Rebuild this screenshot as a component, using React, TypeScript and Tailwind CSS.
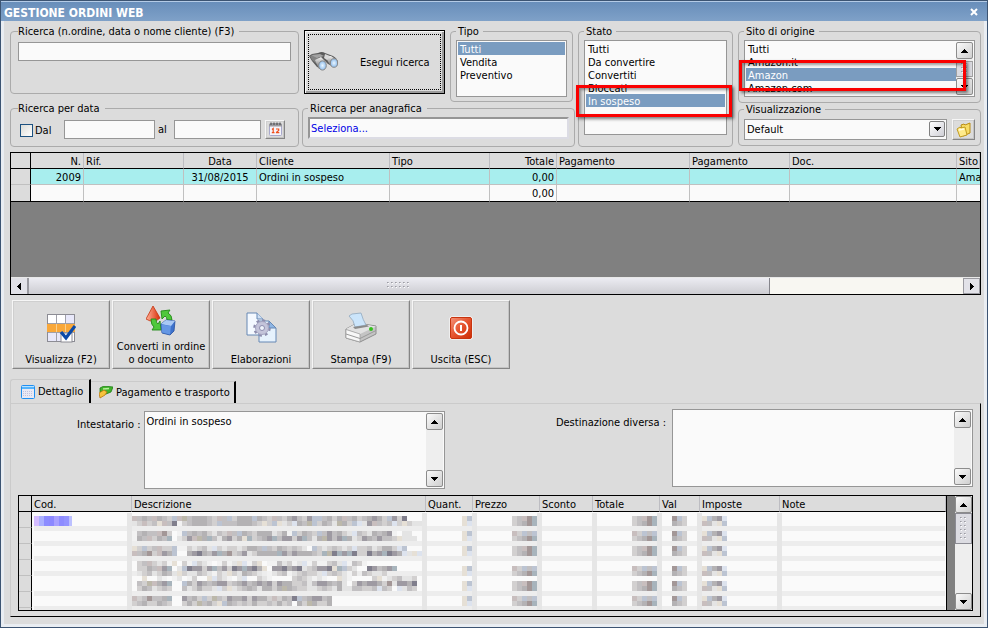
import React from "react";

type Option = { label: string };

const box = "rounded-[4px] border border-[#ababab] min-w-0";
const field = "border border-[#969696] bg-[#fafafa]";
const raised =
  "border border-t-[#f6f6f6] border-l-[#f6f6f6] border-r-[#858585] border-b-[#858585] bg-[#dcdcdc] shadow-[inset_-1px_-1px_0_#c4c4c4,inset_1px_1px_0_#cfcfcf]";

function Arrow({ dir }: { dir: "up" | "down" | "left" | "right" }) {
  const points = {
    up: "0,4 3.5,0 7,4",
    down: "0,0 7,0 3.5,4",
    left: "4,0 4,7 0,3.5",
    right: "0,0 4,3.5 0,7",
  }[dir];
  const wide = dir === "up" || dir === "down";
  return (
    <svg width={wide ? 7 : 4} height={wide ? 4 : 7} shapeRendering="crispEdges" aria-hidden="true">
      <polygon points={points} fill="#000" />
    </svg>
  );
}

const scrollKey =
  "flex size-[17px] shrink-0 items-center justify-center rounded-[2px] border border-[#8c8c8c] bg-linear-to-br from-[#fafafa] to-[#cfcfcf]";

function Grip({ cols, rows }: { cols: number; rows: number }) {
  const dots: React.ReactNode[] = [];
  for (let r = 0; r < rows; r++)
    for (let c = 0; c < cols; c++)
      dots.push(
        <g key={`${r}-${c}`}>
          <rect x={c * 4 + 1} y={r * 4 + 1} width="1" height="1" fill="#fff" />
          <rect x={c * 4} y={r * 4} width="1" height="1" fill="#9a9aa2" />
          <rect x={c * 4 + 1} y={r * 4} width="1" height="1" fill="#b6b6bc" />
        </g>
      );
  return (
    <svg width={cols * 4} height={rows * 4} shapeRendering="crispEdges" aria-hidden="true">
      {dots}
    </svg>
  );
}

function ListBox({ id, options, selected, className }: { id: string; options: Option[]; selected: string; className: string }) {
  return (
    <select
      id={id}
      size={options.length}
      defaultValue={selected}
      className={`block min-w-0 flex-1 appearance-none overflow-hidden border-0 bg-[#fafafa] bg-none p-0 outline-none ${className}`}
    >
      {options.map((o) => (
        <option
          key={o.label}
          value={o.label}
          className="h-[13px] min-h-0 px-[2px] pt-px pb-0 leading-[13px] text-black checked:bg-[linear-gradient(#7a9cc0,#7a9cc0)] checked:[-webkit-text-fill-color:#fff]"
        >
          {o.label}
        </option>
      ))}
    </select>
  );
}

function Memo({ id, label, value, offset }: { id: string; label: string; value: string; offset: string }) {
  return (
    <div className={`flex items-start ${offset}`}>
      <label htmlFor={id} className="mt-[7px] leading-[13px] whitespace-nowrap">
        {label}
      </label>
      <div className={`flex h-[78px] w-[301px] p-px ${field}`}>
        <textarea id={id} defaultValue={value} className="h-full min-w-0 flex-1 resize-none overflow-hidden bg-transparent px-px py-[2px] leading-[13px] outline-none" />
        <div className="flex w-[17px] flex-col justify-between bg-[#eee]">
          <button aria-label="Scorri su" className={scrollKey}><Arrow dir="up" /></button>
          <button aria-label="Scorri giù" className={scrollKey}><Arrow dir="down" /></button>
        </div>
      </div>
    </div>
  );
}

const Binoculars = () => (
  <svg width="30" height="22" viewBox="0 0 30 22" aria-hidden="true">
    <defs>
      <linearGradient id="bn" x1="0" y1="0" x2="0" y2="1"><stop offset="0" stopColor="#f2f2f2" /><stop offset="1" stopColor="#6a6a6a" /></linearGradient>
      <radialGradient id="ln"><stop offset="0" stopColor="#eaf6ff" /><stop offset="1" stopColor="#8dbcec" /></radialGradient>
    </defs>
    <path d="M0 5L3 3L9 2Q13 0 16 2L24 5Q28 7 29 11L25 16L19 13L16 10L13 18L8 16L3 10Z" fill="#5b5b5b" />
    <path d="M1 5L6 4L10 8L8 13L3 9Z" fill="#828282" />
    <path d="M6 9L12 6L16 10L16 18L10 18Z" fill="url(#bn)" />
    <path d="M16 5L22 5L28 9L27 15L21 14Z" fill="url(#bn)" />
    <path d="M2 4L11 3L15 5L8 7Z" fill="#a2a2a2" />
    <path d="M16 3L21 5L18 9L15 7Z" fill="#d9d9d9" />
    <ellipse cx="13.500" cy="14.500" rx="3.800" ry="4.600" fill="url(#ln)" stroke="#888" />
    <ellipse cx="25" cy="12" rx="3.600" ry="4.300" fill="url(#ln)" stroke="#888" />
  </svg>
);

const CalendarIcon = () => (
  <svg width="15" height="15" viewBox="0 0 15 15" aria-hidden="true">
    <rect x="1.500" y="2.500" width="12" height="11" rx="1" fill="#f4f4fb" stroke="#a8a8cc" />
    <path d="M1 4.500V2L3 1H12L14 2V4.500Z" fill="#9a9aa0" />
    <path d="M3 0.500V3M6 0.500V3M9 0.500V3M12 0.500V3" stroke="#444" strokeWidth="1" />
    <path d="M4 7.500L5.200 6.500V11M3.800 10.700H6.500M8 7H10.700V8.500L8.500 10.300V10.700H11.300" stroke="#f0501e" strokeWidth="1.200" fill="none" />
  </svg>
);

const FoldersIcon = () => (
  <svg width="16" height="16" viewBox="0 0 16 16" aria-hidden="true">
    <path d="M5 3L8 2L9 3L14 1L14 11L7 14Z" fill="#f7dc65" stroke="#b98c14" />
    <path d="M1 7L4 5L5 6L9 5L11 13L4 15Z" fill="#ffeb8c" stroke="#c19a20" />
    <path d="M3 8L8 7" stroke="#fffbe0" strokeWidth="1.500" />
  </svg>
);

const GridIcon = () => (
  <svg width="30" height="30" viewBox="0 0 30 30" aria-hidden="true">
    <rect x="1.500" y="1.500" width="27" height="27" fill="#fff" stroke="#8c8c94" />
    <rect x="20" y="2" width="8" height="8" fill="#e8e8fa" />
    <rect x="2" y="20" width="17" height="8" fill="#e8e8fa" />
    <rect x="1" y="11" width="28" height="8" fill="#f9a83a" />
    <path d="M10.500 2V28M19.500 2V28M2 10.500H28M2 19.500H28" stroke="#a0a0a8" />
    <path d="M10.500 11V19M19.500 11V19" stroke="#fbd08c" />
    <rect x="15" y="20" width="11" height="9" fill="#fff" stroke="#8c8c94" />
    <path d="M15 19L20 25L29 13" fill="none" stroke="#0c4aa8" strokeWidth="3.200" />
  </svg>
);

const ConvertIcon = () => (
  <svg width="30" height="30" viewBox="0 0 30 30" aria-hidden="true">
    <defs><linearGradient id="cn" x1="0" x2="1"><stop offset="0" stopColor="#ffb59c" /><stop offset="1" stopColor="#d92c08" /></linearGradient></defs>
    <path d="M7 0L14 12Q8 18 0 13Z" fill="url(#cn)" stroke="#c4320e" strokeWidth=".8" />
    <path d="M15 5L24 4L22 7Q26 9 26 14H21Q21 11 19 10L16 13Z" fill="#4fc83c" stroke="#228a18" strokeWidth=".9" />
    <path d="M5 13H10Q10 17 12 18L14 15L15 24L6 24L8 21Q5 19 5 13Z" fill="#4fc83c" stroke="#228a18" strokeWidth=".9" />
    <path d="M15 18L20 14L29 15L28 25L24 29L16 27Z" fill="#3e72cc" stroke="#254f9e" strokeWidth=".8" />
    <path d="M15 18L20 14L29 15L25 20Z" fill="#a9c9f5" />
    <path d="M15.500 18.500L25 20L24 28.500L16 26.500Z" fill="#6597e4" />
  </svg>
);

const ProcessIcon = () => (
  <svg width="31" height="31" viewBox="0 0 31 31" aria-hidden="true">
    <path d="M1 1H11L17 7V23H1Z" fill="#f4f9ff" stroke="#6688b4" />
    <path d="M11 1V7H17" fill="#cfe0f4" stroke="#6688b4" />
    <path d="M13 9H23L30 16V30H13Z" fill="#e6f2fd" stroke="#6688b4" />
    <path d="M23 9V16H30Z" fill="#8db5e4" stroke="#6688b4" />
    <circle cx="16" cy="16" r="7.500" fill="none" stroke="#8e8eae" strokeWidth="2.500" strokeDasharray="2.900 3" />
    <circle cx="16" cy="16" r="6.500" fill="#c4c4da" stroke="#a4a4c0" />
    <circle cx="16" cy="16" r="2.500" fill="#eef3fb" stroke="#8e8eae" />
  </svg>
);

const PrinterIcon = () => (
  <svg width="32" height="32" viewBox="0 0 32 32" aria-hidden="true">
    <path d="M1 17L12 11L31 14V22L15 30L1 26Z" fill="#c4c4c4" stroke="#8e8e8e" />
    <path d="M1 17L12 11L31 14.500L15 22Z" fill="#e2e2e2" />
    <path d="M1 17.500L15 22V30L1 26Z" fill="#f8f8f8" stroke="#9a9a9a" strokeWidth=".7" />
    <path d="M1 22L15 26.500L31 18.500" fill="none" stroke="#9a9a9a" />
    <path d="M4 4L7 2L16 1Q18 8 21 13L10 15Q9 8 4 4Z" fill="#cbe5fb" stroke="#90a8be" strokeWidth=".8" />
    <path d="M8 15L22 13L24 14.500L10 17Z" fill="#8a8a8a" />
    <circle cx="26" cy="17" r="2" fill="#36c01e" />
  </svg>
);

const PowerIcon = () => (
  <svg width="24" height="24" viewBox="0 0 24 24" aria-hidden="true">
    <defs><linearGradient id="pw" x1="0" y1="0" x2="1" y2="1"><stop offset="0" stopColor="#f4937a" /><stop offset=".5" stopColor="#e5532e" /><stop offset="1" stopColor="#cc2c04" /></linearGradient></defs>
    <rect x=".5" y=".5" width="23" height="23" rx="2" fill="#fff" />
    <rect x="1.500" y="1.500" width="21" height="21" rx="1.500" fill="url(#pw)" stroke="#c8340f" />
    <circle cx="12" cy="12" r="6.500" fill="none" stroke="#fff" strokeWidth="1.800" />
    <path d="M12 9V15" stroke="#fff" strokeWidth="2" />
  </svg>
);

const TableIcon = () => (
  <svg width="14" height="14" viewBox="0 0 14 14" aria-hidden="true">
    <rect x=".5" y=".5" width="13" height="13" rx="1" fill="#e9e9f4" stroke="#1e8ff2" />
    <rect x="1" y="1" width="12" height="3" fill="#55b4fb" />
    <path d="M1 1.500H13" stroke="#b9e2ff" />
    <path d="M2 6.500H12M2 8.500H12M2 10.500H12" stroke="#c2c2de" strokeDasharray="1 1" />
  </svg>
);

const PayIcon = () => (
  <svg width="14" height="13" viewBox="0 0 14 13" aria-hidden="true">
    <path d="M1 2L5 0L14 1L12 6L7 8L1 6Z" fill="#41b32c" stroke="#1e7f14" strokeWidth=".8" />
    <path d="M4 3L10 2.500" stroke="#b7f09c" strokeWidth="1.500" />
    <path d="M0 7L5 4L8 6L6 9L1 12Z" fill="#f6c33c" stroke="#b7760c" strokeWidth=".8" />
  </svg>
);

const tools = [
  { lines: ["Visualizza (F2)"], icon: <GridIcon /> },
  { lines: ["Converti in ordine", "o documento"], icon: <ConvertIcon /> },
  { lines: ["Elaborazioni"], icon: <ProcessIcon /> },
  { lines: ["Stampa (F9)"], icon: <PrinterIcon /> },
  { lines: ["Uscita (ESC)"], icon: <PowerIcon /> },
];

/* Redacted values: every character is one 5px block of the given tone. */
const tones: Record<string, string> = {
  a: "#e4e4e4", b: "#d2d0d0", c: "#c2c0c2", d: "#b4b2b4", e: "#9e9aa2", f: "#807e8c",
  p: "#c8bebe", q: "#a39797", y: "#e6e0d6", z: "#bcb8aa", l: "#dde3ee", m: "#bcc4d2", g: "#a8b4bc", w: "#f2f2f2",
};
const redacted: [number, string][] = [
  [516, "pcdcpdcbmpzcdddcbpcmbdddmdcbpcbdecbemmcdbdpcdbcdedbmebf"],
  [521, "abpbcypcfwbcdddcbmcccdddcbybmyabldczmbdcazdbmlaepcbclbybaa"],
  [531, "wcdccpqb.wmcdcdbacbpcmdcbdddabdwmbdcbmcecdbalcbadcdew.aa"],
  [536, "wdcpbdcg.abepzdgcadebdygbcdegceebegcadzecegdabedceccbyaaa"],
  [546, "ybmbcpbbmwwbabcalbabbabddcmcbdcbcba.mbabcbablbbcabddblm"],
  [551, "pcdqbpedm..defdcegdqbceabddddgecedddcbgzfgegfbbfdegfedlayl"],
  [561, ".bcpbabwy.bwlbaw.wbwaylwby.wwcabwalwbwwbcalwcbw"],
  [566, ".bbdcpeg.amfeebegcebfegefdy.eefdefabceefygmba..fecdeg"],
  [571, ".abcabdcaybaacbawbaybadcba.wabcwabcbbalbcbawb.cbaab"],
  [576, "..y..aw.wa.wb..ylbaw.al..baw....bcbawaw..yaw....bywabcaab"],
  [581, ".cbzpdeg..mdbedcdeebcdecdedebeddbbcaceedcda.bedeedbqaeedf"],
  [586, ".bdcabcb..cabdbbalbyabcdcaddbdzdcbbaabcbadaaccbbclcb.lacb"],
  [596, "pbcqccdg..ecdbmbzcbeddebeddbpbdcfmcdeecd"],
  [601, "bcdbbdcb..bdbzcdbymdcbcbdbbcbdbc.dbzdbbd"],
];
const amounts = ["bcpqg", "pbmcm", "bcdqg"];

function Mosaic() {
  const out: React.ReactNode[] = [];
  const run = (x: number, y: number, s: string) =>
    s.split("").forEach((ch, i) => {
      if (tones[ch]) out.push(<rect key={`${x}-${y}-${i}`} x={x + i * 5} y={y} width="5" height="5" fill={tones[ch]} />);
    });
  [526, 541, 556, 571, 591, 606].forEach((y, i) =>
    out.push(<rect key={`s${y}`} x="34" y={y} width="911" height={i === 5 ? 4 : 5} fill="#ededed" />)
  );
  [127, 422, 472, 537, 592, 657, 697, 777].forEach((x) =>
    out.push(<rect key={`v${x}`} x={x} y="513" width="5" height="97" fill="#e6e6e6" />)
  );
  redacted.forEach(([y, s]) => run(132, y, s));
  [516, 531, 546, 566, 581, 596].forEach((y, r) => {
    run(462, y, "ym");
    run(462, y + 5, "yl");
    run(512, y, r % 2 ? amounts[1] : amounts[0]);
    run(512, y + 5, amounts[2]);
    run(632, y, r % 2 ? amounts[1] : amounts[0]);
    run(632, y + 5, amounts[2]);
    run(672, y, "qmb");
    run(672, y + 5, "dcb");
    run(702, y, "ymdel");
    run(702, y + 5, "pcaym");
  });
  ["#d4bcff", "#aab0ff", "#8c8cff", "#8c88ff", "#a8a0ff", "#8e8cff", "#9494ff", "#bcc0ff"].forEach((c, i) => {
    const w = i === 7 ? 3 : 5;
    out.push(<rect key={`b${i}`} x={34 + i * 5} y="516" width={w} height="10" fill={c} />);
  });
  return (
    <svg className="absolute top-[16px] left-[14px]" width="913" height="99" viewBox="33 512 913 99" shapeRendering="crispEdges" role="img" aria-label="Valori oscurati">
      {out}
    </svg>
  );
}

const th = "overflow-hidden whitespace-nowrap border-r border-b border-r-[#bdbdc2] border-b-black bg-[#dcdcdc] p-0 px-[2px] pt-px font-normal";
const td = "overflow-hidden border-r border-b border-[#c0c0c0] p-0 px-[2px] pt-px whitespace-nowrap";

const orderCols = [
  { name: "N.", w: "w-[53px]", align: "text-right" },
  { name: "Rif.", w: "w-[100px]", align: "text-left" },
  { name: "Data", w: "w-[73px]", align: "text-center" },
  { name: "Cliente", w: "w-[133px]", align: "text-left" },
  { name: "Tipo", w: "w-[100px]", align: "text-left" },
  { name: "Totale", w: "w-[67px]", align: "text-right" },
  { name: "Pagamento", w: "w-[133px]", align: "text-left" },
  { name: "Pagamento", w: "w-[100px]", align: "text-left" },
  { name: "Doc.", w: "w-[167px]", align: "text-left" },
  { name: "Sito", w: "", align: "text-left" },
];
const orderRows = [
  ["2009", "", "31/08/2015", "Ordini in sospeso", "", "0,00", "", "", "", "Ama"],
  ["", "", "", "", "", "0,00", "", "", "", ""],
];

const detailCols = [
  { name: "Cod.", w: "w-[100px]" },
  { name: "Descrizione", w: "w-[294px]" },
  { name: "Quant.", w: "w-[47px]" },
  { name: "Prezzo", w: "w-[67px]" },
  { name: "Sconto", w: "w-[53px]" },
  { name: "Totale", w: "w-[67px]" },
  { name: "Val", w: "w-[40px]" },
  { name: "Imposte", w: "w-[80px]" },
  { name: "Note", w: "" },
];

export default function App() {
  return (
    <div className="flex min-h-screen flex-col border border-[#3c5472] bg-[#dcdcdc] font-['DejaVu_Sans_Condensed','DejaVu_Sans',sans-serif] text-[11px] leading-[13px] text-black">
      <header className="flex h-[20px] items-center justify-between border-t border-t-[#b4cbe6] bg-linear-to-b from-[#688eba] to-[#7fa1c8] pr-[9px] pl-[3px]">
        <h1 className="pt-[3px] text-[12px] font-bold text-white">GESTIONE ORDINI WEB</h1>
        <button aria-label="Chiudi" className="flex size-[9px] items-center justify-center">
          <svg width="8" height="8" viewBox="0 0 8 8"><path d="M1 1L7 7M7 1L1 7" stroke="#fff" strokeWidth="2" /></svg>
        </button>
      </header>

      <main className="flex flex-1 flex-col border-x-[3px] border-b-[3px] border-[#e9edf2] pt-[4px] pr-[3px] pb-[7px] pl-[6px]">
        <section className="flex gap-[3px]">
          <div className="flex w-[565px] shrink-0 flex-col">
            <div className="flex gap-[5px]">
              <fieldset className={`${box} h-[69px] w-[289px] px-[7px]`}>
                <legend className="pr-[5px]"><label htmlFor="q">Ricerca (n.ordine, data o nome cliente) (F3)</label></legend>
                <input id="q" className={`mt-[4px] block h-[19px] w-full px-[2px] ${field}`} />
              </fieldset>
              <button className="mt-[5px] h-[64px] w-[141px] border border-black p-[3px] shadow-[inset_1px_1px_0_#f8f8f8,inset_-2px_-2px_0_#9c9c9c]">
                <span className="flex h-full items-center gap-[21px] border border-dotted border-black">
                  <Binoculars />
                  Esegui ricerca
                </span>
              </button>
              <fieldset className={`${box} h-[77px] w-[123px] px-[5px]`}>
                <legend className="pr-[4px] pl-[2px]"><label htmlFor="tipo">Tipo</label></legend>
                <div className={`mt-[2px] flex h-[57px] p-px ${field}`}>
                  <ListBox id="tipo" selected="Tutti" className="h-[39px]" options={[{ label: "Tutti" }, { label: "Vendita" }, { label: "Preventivo" }]} />
                </div>
              </fieldset>
            </div>
            <div className="flex gap-[3px]">
              <fieldset className={`${box} h-[45px] w-[289px] px-[7px]`}>
                <legend className="pr-[5px]">Ricerca per data</legend>
                <div className="mt-[5px] flex items-center pl-[2px]">
                  <input id="dal" type="checkbox" className="mt-[2px] size-[13px] appearance-none border border-[#1c5180] bg-linear-to-br from-[#dcdcd7] to-white" />
                  <label htmlFor="dal" className="mt-[2px] ml-[2px] w-[29px]">Dal</label>
                  <input aria-label="Data iniziale" className={`h-[19px] w-[91px] px-[2px] ${field}`} />
                  <label htmlFor="al" className="w-[19px] pl-[3px]">al</label>
                  <input id="al" className={`h-[19px] w-[87px] px-[2px] ${field}`} />
                  <button aria-label="Calendario" className={`ml-[4px] flex h-[19px] w-[20px] items-center justify-center ${raised}`}><CalendarIcon /></button>
                </div>
              </fieldset>
              <fieldset className={`${box} h-[45px] w-[273px] px-[5px]`}>
                <legend className="pr-[5px] pl-[2px]"><label htmlFor="ana">Ricerca per anagrafica</label></legend>
                <input id="ana" defaultValue="Seleziona..." className="mt-[2px] block h-[22px] w-full border-2 border-t-[#969696] border-r-[#dcdce4] border-b-[#dcdce4] border-l-[#969696] bg-[#fafafa] px-px text-[#0000e6]" />
              </fieldset>
            </div>
          </div>

          <fieldset className={`${box} relative h-[122px] w-[155px] shrink-0 px-[5px]`}>
            <legend className="pr-[4px] pl-[2px]"><label htmlFor="stato">Stato</label></legend>
            <div className={`mt-[2px] flex h-[95px] p-px ${field}`}>
              <ListBox id="stato" selected="In sospeso" className="h-[65px]" options={[{ label: "Tutti" }, { label: "Da convertire" }, { label: "Convertiti" }, { label: "Bloccati" }, { label: "In sospeso" }]} />
            </div>
            <div className="pointer-events-none absolute top-[47px] left-[-3px] h-[32px] w-[156px] border-[3px] border-[#fa0000] shadow-[2px_2px_3px_#00000080,inset_2px_2px_3px_#00000060]" />
          </fieldset>

          <div className="flex min-w-0 flex-1 flex-col pl-[2px]">
            <fieldset className={`${box} relative h-[78px] px-[5px]`}>
              <legend className="pr-[4px] pl-[2px]"><label htmlFor="sito">Sito di origine</label></legend>
              <div className={`mt-[2px] flex h-[57px] p-px ${field}`}>
                <ListBox id="sito" selected="Amazon" className="h-[52px]" options={[{ label: "Tutti" }, { label: "Amazon.it" }, { label: "Amazon" }, { label: "Amazon.com" }]} />
                <div className="flex w-[17px] flex-col justify-between bg-[#eee]">
                  <button aria-label="Su" className={scrollKey}><Arrow dir="up" /></button>
                  <div className="flex h-[16px] items-center justify-center border border-[#a0a0a0] bg-[#dadae0]"><Grip cols={2} rows={3} /></div>
                  <button aria-label="Giù" className={scrollKey}><Arrow dir="down" /></button>
                </div>
              </div>
              <div className="pointer-events-none absolute top-[22px] left-0 h-[31px] w-[227px] border-[3px] border-[#fa0000] shadow-[2px_2px_3px_#00000080,inset_2px_2px_3px_#00000060]" />
            </fieldset>
            <fieldset className={`${box} h-[43px] px-[5px]`}>
              <legend className="pr-[4px] pl-[2px]"><label htmlFor="vis">Visualizzazione</label></legend>
              <div className="mt-[3px] flex gap-[5px]">
                <div className="relative min-w-0 flex-1">
                  <select id="vis" className={`block h-[21px] w-full appearance-none px-[2px] ${field}`}><option>Default</option></select>
                  <span className="pointer-events-none absolute top-[2px] right-[2px] flex size-[16px] items-center justify-center rounded-[2px] border border-[#808080] bg-linear-to-br from-white to-[#cfcfd6]"><Arrow dir="down" /></span>
                </div>
                <button aria-label="Apri" className={`flex h-[21px] w-[23px] items-center justify-center ${raised}`}><FoldersIcon /></button>
              </div>
            </fieldset>
          </div>
        </section>

        <section className="mt-[5px] h-[143px] shrink-0 overflow-hidden border border-black bg-[#808080]">
          <table className="w-full table-fixed border-separate border-spacing-0">
            <thead>
              <tr className="h-[16px]">
                <th className={`${th} w-[20px] border-r-black`} />
                {orderCols.map((c, i) => <th key={i} scope="col" className={`${th} ${c.w} ${c.align}`}>{c.name}</th>)}
              </tr>
            </thead>
            <tbody>
              {orderRows.map((row, r) => (
                <tr key={r} className={r === 0 ? "h-[16px] bg-[#a8eeee]" : "h-[17px] bg-[#fafafa]"}>
                  <td className={`${td} border-r-black bg-[#dcdcdc] ${r ? "border-b-black" : ""}`} />
                  {row.map((v, i) => (
                    <td key={i} className={`${td} ${r ? "border-b-black" : ""} ${orderCols[i].align} last:border-r-0 last:pr-0`}>{v}</td>
                  ))}
                </tr>
              ))}
            </tbody>
          </table>
          <div className="mt-[75px] flex h-[17px] border-t border-[#e8e8e8] bg-[#f8f7f2]">
            <button aria-label="Scorri a sinistra" className="flex w-[18px] items-center justify-center border-r-2 border-[#9a9aa0] bg-[#e2e2e8]"><Arrow dir="left" /></button>
            <div className="flex flex-[742] items-center justify-center border-r border-[#85858c] bg-linear-to-b from-[#ececf2] to-[#cdcdd2]"><Grip cols={6} rows={2} /></div>
            <div className="flex-[193]" />
            <button aria-label="Scorri a destra" className="flex w-[17px] items-center justify-center border border-[#9a9aa0] bg-[#e2e2e8]"><Arrow dir="right" /></button>
          </div>
        </section>

        <nav className="mt-[5px] flex gap-[2px] pl-[2px]">
          {tools.map((t) => (
            <button key={t.lines[0]} className={`flex h-[69px] w-[98px] flex-col items-center pb-[2px] ${raised}`}>
              <span className="flex min-h-0 flex-1 items-center pt-px">{t.icon}</span>
              {t.lines.map((l) => <span key={l} className="whitespace-nowrap">{l}</span>)}
            </button>
          ))}
        </nav>

        <div role="tablist" className="mt-[10px] flex items-end">
          <button role="tab" aria-selected="true" className="flex h-[24px] w-[81px] items-center gap-[3px] rounded-tl-[3px] border-t border-r-2 border-l border-t-[#cbcbcb] border-r-black border-l-[#cbcbcb] pl-[10px]"><TableIcon />Dettaglio</button>
          <button role="tab" aria-selected="false" className="flex h-[22px] items-center gap-[3px] border-t border-r-2 border-t-[#cbcbcb] border-r-black pr-[4px] pl-[8px]"><PayIcon />Pagamento e trasporto</button>
        </div>

        <section className="flex flex-1 flex-col border border-t-[#cbcbcb] border-r-black border-b-black border-l-[#cbcbcb] px-[7px] pt-[5px] pb-[5px]">
          <div className="flex justify-between pl-[59px]">
            <Memo id="int" label="Intestatario :" value="Ordini in sospeso" offset="mt-[2px] gap-[3px]" />
            <Memo id="dest" label="Destinazione diversa :" value="" offset="gap-[6px]" />
          </div>
          <div className="relative mt-[6px] flex h-[116px] overflow-hidden border border-black bg-[#808080]">
            <div className="min-w-0 flex-1 overflow-hidden border-r border-black bg-[#fafafa]">
              <table className="w-full table-fixed border-separate border-spacing-0">
                <thead>
                  <tr className="h-[16px]">
                    <th className={`${th} w-[13px] border-r-black`} />
                    {detailCols.map((c) => <th key={c.name} scope="col" className={`${th} ${c.w} text-left`}>{c.name}</th>)}
                  </tr>
                </thead>
                <tbody>
                  {[0, 1, 2, 3, 4, 5, 6].map((r) => (
                    <tr key={r} className="h-[16px]">
                      <td className={`${td} border-r-black bg-[#dcdcdc]`} />
                      <td colSpan={9} className="p-0" />
                    </tr>
                  ))}
                </tbody>
              </table>
            </div>
            <Mosaic />
            <div className="ml-[8px] flex w-[17px] flex-col bg-[#eee]">
              <button aria-label="Scorri su" className={scrollKey}><Arrow dir="up" /></button>
              <div className="flex h-[31px] items-center justify-center border border-[#8c8c94] bg-[#dcdce2]"><Grip cols={2} rows={6} /></div>
              <div className="flex-1" />
              <button aria-label="Scorri giù" className={scrollKey}><Arrow dir="down" /></button>
            </div>
          </div>
        </section>
      </main>
    </div>
  );
}
